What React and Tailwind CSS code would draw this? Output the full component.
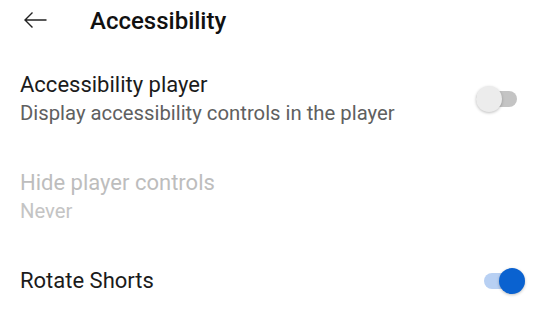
import { useState } from "react";

function Toggle({ on }) {
  return (
    <div className="relative w-[41px] h-[26px] shrink-0">
      <div
        className={
          on
            ? "absolute inset-x-0 top-[5px] h-[16px] rounded-full bg-[#b8d0f3]"
            : "absolute inset-x-0 top-[5px] h-[16px] rounded-full bg-[#c4c4c4]"
        }
      />
      <div
        className={
          on
            ? "absolute right-0 top-0 w-[26px] h-[26px] rounded-full bg-[#0a62d0] shadow-[0_1px_3px_rgba(0,0,0,0.25)]"
            : "absolute left-0 top-0 w-[26px] h-[26px] rounded-full bg-[#ececec] shadow-[0_1px_3px_rgba(0,0,0,0.25)]"
        }
      />
    </div>
  );
}

export default function App() {
  const [player, setPlayer] = useState(false);
  const [rotate, setRotate] = useState(true);

  return (
    <div className="w-[555px] h-[312px] bg-white overflow-hidden font-['Roboto',sans-serif]">
      {/* Header */}
      <div className="h-[40px] flex items-center">
        <svg className="ml-[24px] w-[23px] h-[16px]" viewBox="0 0 23 16" fill="none" stroke="#222" strokeWidth="1.4">
          <path d="M22.5 8H1M8.5 0.5L1 8l7.5 7.5" />
        </svg>
        <div className="ml-[43px] mt-[2px] text-[24px] font-medium text-[#111] leading-none">Accessibility</div>
      </div>

      {/* Accessibility player */}
      <div className="mt-[30px] pl-[20px] pr-[38px] flex items-center" onClick={() => setPlayer(!player)}>
        <div className="flex-1">
          <div className="text-[22px] leading-[29px] text-[#1b1b1b]">Accessibility player</div>
          <div className="text-[20.3px] leading-[29px] text-[#606060]">Display accessibility controls in the player</div>
        </div>
        <Toggle on={player} />
      </div>

      {/* Hide player controls */}
      <div className="mt-[40px] pl-[20px]">
        <div className="text-[22px] leading-[29px] text-[#bdbdbd]">Hide player controls</div>
        <div className="text-[20.3px] leading-[29px] text-[#c4c4c4]">Never</div>
      </div>

      {/* Rotate Shorts */}
      <div className="mt-[40px] pl-[20px] pr-[30px] flex items-center" onClick={() => setRotate(!rotate)}>
        <div className="flex-1 text-[22px] leading-[29px] text-[#1b1b1b]">Rotate Shorts</div>
        <Toggle on={rotate} />
      </div>
    </div>
  );
}
